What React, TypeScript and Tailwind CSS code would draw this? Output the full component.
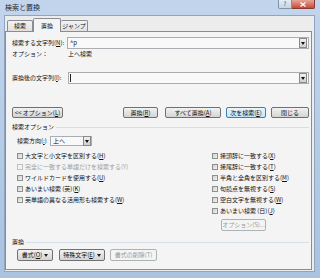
import type { ReactNode } from 'react';

const U = ({ k }: { k: string }) => <span className="underline">{k}</span>;

function Btn({
  children,
  className = '',
  primary,
  disabled,
}: {
  children: ReactNode;
  className?: string;
  primary?: boolean;
  disabled?: boolean;
}) {
  return (
    <div
      className={
        'flex h-[11px] items-center justify-center rounded-[2px] border leading-none ' +
        (primary
          ? 'border-[#3c7fb1] bg-gradient-to-b from-[#eaf6fd] to-[#bee6fd] text-[#111]'
          : disabled
            ? 'border-[#adb2b5] bg-[#f4f4f4] text-[#9a9a9a]'
            : 'border-[#707070] bg-gradient-to-b from-[#f2f2f2] to-[#d4d4d4] text-[#111]') +
        ' ' +
        className
      }
    >
      {children}
    </div>
  );
}

function Check({ children, disabled }: { children: ReactNode; disabled?: boolean }) {
  return (
    <div className="flex h-[11px] items-center gap-[2px]">
      <div
        className={
          'h-[6px] w-[6px] shrink-0 border ' +
          (disabled ? 'border-[#c0c0c0] bg-[#f4f4f4]' : 'border-[#8e8f8f] bg-gradient-to-br from-[#cfcfcf] to-[#f4f4f4]')
        }
      />
      <span className={'leading-none ' + (disabled ? 'text-[#a0a0a0]' : 'text-[#111]')}>{children}</span>
    </div>
  );
}

function Arrow() {
  return (
    <div className="flex h-[10px] w-[8px] shrink-0 items-center justify-center border border-[#8a8a8a] bg-gradient-to-b from-[#f0f0f0] to-[#d0d0d0]">
      <svg width="4" height="3" viewBox="0 0 4 3">
        <path d="M0 0h4L2 3z" fill="#111" />
      </svg>
    </div>
  );
}

function Caret() {
  return (
    <svg width="4" height="3" viewBox="0 0 4 3" className="ml-[2px]">
      <path d="M0 0h4L2 3z" fill="#222" />
    </svg>
  );
}

export default function App() {
  return (
    <div className="flex h-[278px] w-[320px] flex-col whitespace-nowrap bg-gradient-to-b from-[#c2d5ec] to-[#a9c2e0] font-['Noto_Sans_CJK_JP','Noto_Sans',sans-serif] text-[6px] text-[#111]">
      {/* title bar */}
      <div className="flex h-[15px] items-start justify-between pl-[5px] pr-[5px]">
        <span className="mt-[4px] text-[7px] leading-none text-[#1e2b3c]">検索と置換</span>
        <div className="flex">
          <div className="flex h-[9px] w-[14px] items-center justify-center rounded-bl-[2px] border border-t-0 border-[#7f93ab] bg-gradient-to-b from-[#e4ecf5] to-[#c6d4e4] leading-none text-[#444]">
            ?
          </div>
          <div className="flex h-[9px] w-[23px] items-center justify-center rounded-br-[2px] border border-l-0 border-t-0 border-[#8a3a32] bg-gradient-to-b from-[#e5a598] to-[#c44a3a]">
            <svg width="6" height="5" viewBox="0 0 6 5">
              <path d="M0.5 0.5l5 4M5.5 0.5l-5 4" stroke="#fff" strokeWidth="1.3" />
            </svg>
          </div>
        </div>
      </div>

      {/* client area */}
      <div className="ml-[4px] mr-[5px] flex h-[257px] flex-col border border-[#8ea4c0] bg-[#ececec] pt-[2px]">
        {/* tabs */}
        <div className="flex h-[13px] items-end pl-[2px]">
          <div className="flex h-[11px] w-[26px] items-center justify-center rounded-t-[2px] border border-b-0 border-[#898c95] bg-gradient-to-b from-[#f3f3f3] to-[#e0e0e0] leading-none">
            検索
          </div>
          <div className="relative -mb-px flex h-[14px] w-[28px] items-center justify-center rounded-t-[2px] border border-b-0 border-[#898c95] bg-[#f4f4f4] leading-none">
            置換
          </div>
          <div className="flex h-[11px] w-[27px] items-center justify-center rounded-t-[2px] border border-b-0 border-l-0 border-[#898c95] bg-gradient-to-b from-[#f3f3f3] to-[#e0e0e0] leading-none">
            ジャンプ
          </div>
        </div>

        {/* tab panel */}
        <div className="mr-[2px] flex h-[239px] flex-col border border-[#898c95] bg-[#f4f4f4] pl-[6px] pr-[2px] leading-none">
          <div className="mt-[5px] flex h-[12px] items-center">
            <span className="w-[55px]">
              検索する文字列(<U k="N" />):
            </span>
            <div className="flex h-[12px] flex-1 items-center justify-between border border-[#abadb3] bg-[#f9f9f9] pl-[2px] pr-[1px]">
              <span>^p</span>
              <Arrow />
            </div>
          </div>
          <div className="flex h-[10px] items-center">
            <span className="w-[56px]">オプション：</span>
            <span>上へ検索</span>
          </div>

          <div className="mt-[13px] flex h-[12px] items-center">
            <span className="w-[56px]">
              置換後の文字列(<U k="I" />):
            </span>
            <div className="flex h-[12px] flex-1 items-center justify-between border border-[#abadb3] bg-[#f9f9f9] pl-[1px] pr-[1px]">
              <div className="h-[8px] w-px bg-[#222]" />
              <Arrow />
            </div>
          </div>

          {/* action buttons */}
          <div className="mt-[23px] flex h-[11px] items-center">
            <Btn className="w-[51px]">
              &lt;&lt; オプション(<U k="L" />)
            </Btn>
            <Btn className="ml-[60px] w-[35px]">
              置換(<U k="R" />)
            </Btn>
            <Btn className="ml-[7px] w-[56px]">
              すべて置換(<U k="A" />)
            </Btn>
            <Btn primary className="ml-[5px] w-[40px]">
              次を検索(<U k="E" />)
            </Btn>
            <Btn className="ml-[5px] w-[38px]">閉じる</Btn>
          </div>

          {/* search options */}
          <div className="mt-[4px] flex h-[10px] items-center">
            <span>検索オプション</span>
            <div className="ml-[2px] h-px flex-1 bg-[#d5dfe5]" />
          </div>
          <div className="mt-[4px] flex h-[10px] items-center pl-[5px]">
            <span className="w-[33px]">
              検索方向(<U k=":" />)
            </span>
            <div className="flex h-[10px] w-[42px] items-center justify-between border border-[#abadb3] bg-[#f9f9f9] pl-[2px]">
              <span>上へ</span>
              <Arrow />
            </div>
          </div>

          <div className="mt-[4px] flex pl-[5px]">
            <div className="flex w-[195px] flex-col">
              <Check>
                大文字と小文字を区別する(<U k="H" />)
              </Check>
              <Check disabled>完全に一致する単語だけを検索する(Y)</Check>
              <Check>
                ワイルドカードを使用する(<U k="U" />)
              </Check>
              <Check>
                あいまい検索 (英)(<U k="K" />)
              </Check>
              <Check>
                英単語の異なる活用形も検索する(<U k="W" />)
              </Check>
            </div>
            <div className="flex flex-col">
              <Check>
                接頭辞に一致する(<U k="X" />)
              </Check>
              <Check>
                接尾辞に一致する(<U k="T" />)
              </Check>
              <Check>
                半角と全角を区別する(<U k="M" />)
              </Check>
              <Check>
                句読点を無視する(<U k="S" />)
              </Check>
              <Check>
                空白文字を無視する(<U k="W" />)
              </Check>
              <Check>
                あいまい検索 (日)(<U k="J" />)
              </Check>
              <Btn disabled className="ml-[9px] mt-[3px] h-[12px] w-[45px]">
                オプション(S)...
              </Btn>
            </div>
          </div>

          {/* replace group */}
          <div className="mt-[6px] flex h-[10px] items-center">
            <span>置換</span>
            <div className="ml-[2px] h-px flex-1 bg-[#d5dfe5]" />
          </div>
          <div className="mt-[2px] flex h-[12px] items-center pl-[5px]">
            <Btn className="h-[12px] w-[36px]">
              書式(<U k="O" />)
              <Caret />
            </Btn>
            <Btn className="ml-[6px] h-[12px] w-[46px]">
              特殊文字(<U k="E" />)
              <Caret />
            </Btn>
            <Btn disabled className="ml-[5px] h-[12px] w-[47px]">
              書式の削除(T)
            </Btn>
          </div>
        </div>
      </div>
    </div>
  );
}
